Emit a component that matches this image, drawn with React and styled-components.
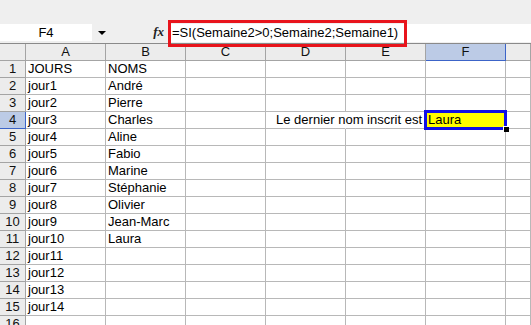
import React from "react";
import styled, { createGlobalStyle } from "styled-components";

const GlobalStyle = createGlobalStyle`
  html, body {
    margin: 0;
    padding: 0;
    background: #ffffff;
  }
  body {
    font-family: "Liberation Sans", Arial, sans-serif;
    font-size: 13px;
    color: #000;
  }
`;

const Window = styled.div`
  width: 531px;
  height: 325px;
  overflow: hidden;
  background: #ffffff;
`;

const FormulaBar = styled.div`
  position: relative;
  z-index: 2;
  display: flex;
  align-items: flex-end;
  height: 44px;
  box-sizing: border-box;
  background: #efefef;
  border-bottom: 1px solid #8a8a8a;
`;

const NameBox = styled.div`
  width: 92px;
  height: 17px;
  margin-bottom: 2px;
  background: #ffffff;
  line-height: 17px;
  text-align: center;
`;

const DropArrow = styled.span`
  width: 0;
  height: 0;
  margin: 0 0 8px 6px;
  border-left: 4px solid transparent;
  border-right: 4px solid transparent;
  border-top: 4px solid #000;
`;

const FxLabel = styled.span`
  margin: 0 4px 5px auto;
  font-family: "Liberation Serif", "Times New Roman", serif;
  font-style: italic;
  font-weight: bold;
  font-size: 13px;
  line-height: 13px;
  color: #222;
`;

const FormulaField = styled.div`
  width: 363px;
  height: 18px;
  margin-bottom: 1px;
  padding-left: 4px;
  box-sizing: border-box;
  background: #ffffff;
  line-height: 17px;
  white-space: nowrap;
`;

const Highlight = styled.div`
  position: absolute;
  left: 168px;
  top: 20px;
  width: 239px;
  height: 27px;
  box-sizing: border-box;
  border: 3px solid #e8141c;
  pointer-events: none;
`;

const Row = styled.div`
  display: grid;
  grid-template-columns: 26px repeat(6, 80px) 1fr;
  height: 17px;
`;

const HeadCell = styled.div`
  box-sizing: border-box;
  background: ${(p) => (p.$active ? "#bccbe6" : "#ececec")};
  border-right: 1px solid ${(p) => (p.$active ? "#3c64c8" : "#a4a4a4")};
  border-bottom: 1px solid ${(p) => (p.$active ? "#3c64c8" : "#a4a4a4")};
  text-align: center;
  line-height: 16px;
  color: #111;
`;

const Cell = styled.div`
  position: relative;
  box-sizing: border-box;
  display: flex;
  justify-content: ${(p) => (p.$right ? "flex-end" : "flex-start")};
  padding: ${(p) => (p.$right ? "0 3px 0 0" : "0 0 0 2px")};
  border-right: 1px solid ${(p) => (p.$hideRight ? "transparent" : "#b8b8b8")};
  border-bottom: 1px solid #b8b8b8;
  line-height: 16px;
  white-space: nowrap;
  overflow: ${(p) => (p.$right ? "visible" : "hidden")};
`;

const SelectedCell = styled(Cell)`
  overflow: visible;
  background: #ffff00;
  z-index: 1;

  &::before {
    content: "";
    position: absolute;
    top: -2px;
    left: -2px;
    right: -2px;
    bottom: -2px;
    border: 3px solid #1010e6;
  }

  &::after {
    content: "";
    position: absolute;
    right: -4px;
    bottom: -4px;
    width: 5px;
    height: 5px;
    background: #000;
    border-top: 1px solid #fff;
    border-left: 1px solid #fff;
  }
`;

const columns = ["A", "B", "C", "D", "E", "F", ""];

const data = [
  ["JOURS", "NOMS"],
  ["jour1", "André"],
  ["jour2", "Pierre"],
  ["jour3", "Charles"],
  ["jour4", "Aline"],
  ["jour5", "Fabio"],
  ["jour6", "Marine"],
  ["jour7", "Stéphanie"],
  ["jour8", "Olivier"],
  ["jour9", "Jean-Marc"],
  ["jour10", "Laura"],
  ["jour11"],
  ["jour12"],
  ["jour13"],
  ["jour14"],
  [],
];

// cellule active : F4
const ACTIVE_ROW = 4;
const ACTIVE_COL = 5;

function SheetRow({ index, values }) {
  const rowNum = index + 1;
  return (
    <Row>
      <HeadCell $active={rowNum === ACTIVE_ROW}>{rowNum}</HeadCell>
      {columns.map((_, c) => {
        if (rowNum === ACTIVE_ROW && c === ACTIVE_COL) {
          return <SelectedCell key={c}>Laura</SelectedCell>;
        }
        if (rowNum === ACTIVE_ROW && c === 4) {
          return (
            <Cell key={c} $right>
              <span>Le dernier nom inscrit est</span>
            </Cell>
          );
        }
        return (
          <Cell key={c} $hideRight={rowNum === ACTIVE_ROW && c === 3}>
            {values[c] || ""}
          </Cell>
        );
      })}
    </Row>
  );
}

export default function App() {
  return (
    <>
      <GlobalStyle />
      <Window>
        <FormulaBar>
          <NameBox>F4</NameBox>
          <DropArrow />
          <FxLabel>fx</FxLabel>
          <FormulaField>=SI(Semaine2&gt;0;Semaine2;Semaine1)</FormulaField>
          <Highlight />
        </FormulaBar>
        <Row>
          <HeadCell />
          {columns.map((col, c) => (
            <HeadCell key={c} $active={c === ACTIVE_COL}>
              {col}
            </HeadCell>
          ))}
        </Row>
        {data.map((values, i) => (
          <SheetRow key={i} index={i} values={values} />
        ))}
      </Window>
    </>
  );
}
